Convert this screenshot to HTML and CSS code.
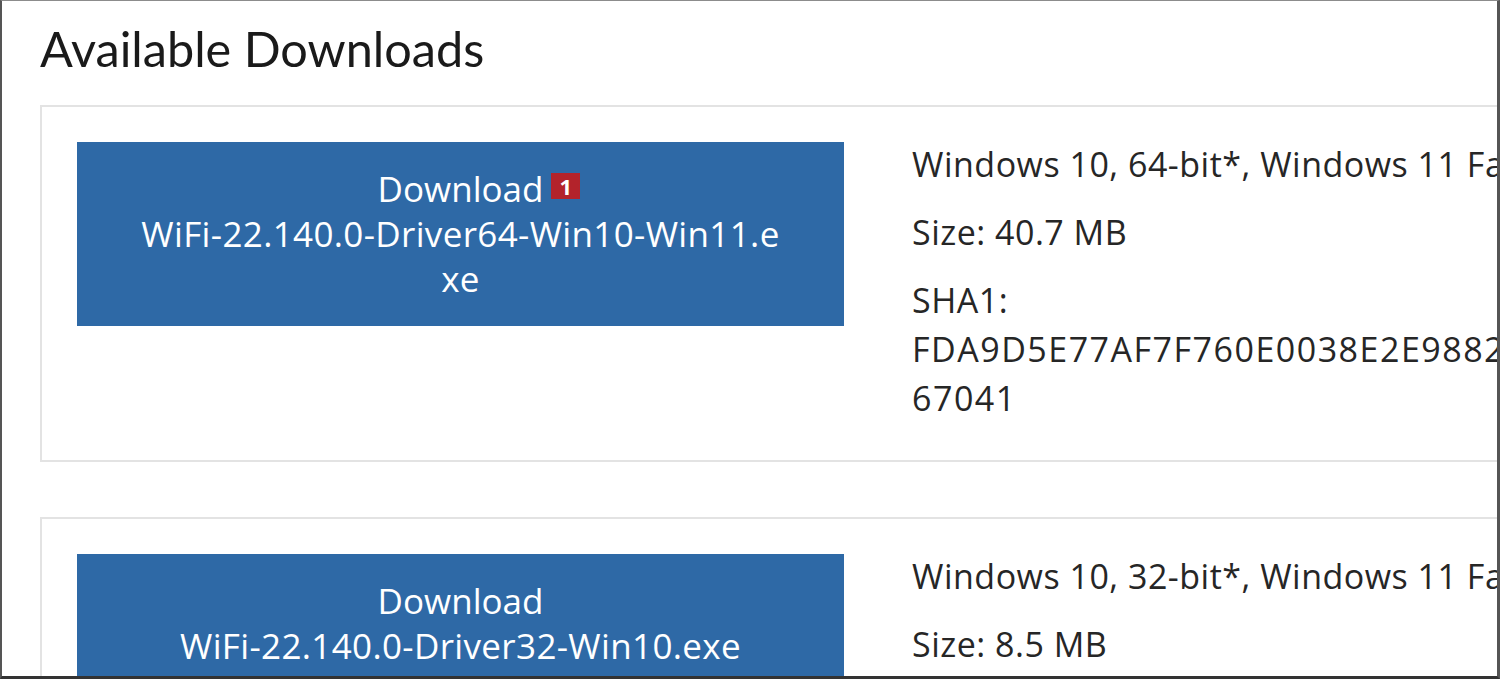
FILE: index.html
```html
<!DOCTYPE html>
<html lang="en">
<head>
    <meta charset="UTF-8">
    <meta name="viewport" content="width=device-width, initial-scale=1.0">
    <title>Available Downloads</title>
    <link rel="stylesheet" href="styles.css">
</head>
<body>
    <div class="frame">
        <h1 class="title">Available Downloads</h1>

        <div class="card">
            <a class="dl-button" href="#">
                <span class="dl-label"><span class="dl-word">Download<span class="badge">1</span></span></span>
                <span class="dl-file">WiFi-22.140.0-Driver64-Win10-Win11.exe</span>
            </a>
            <div class="info">
                <p>Windows 10, 64-bit*, Windows 11 Family*</p>
                <p>Size: 40.7 MB</p>
                <p>SHA1:<span class="hash">FDA9D5E77AF7F760E0038E2E98827B3C1D467041</span></p>
            </div>
        </div>

        <div class="card">
            <a class="dl-button" href="#">
                <span class="dl-label"><span class="dl-word">Download</span></span>
                <span class="dl-file">WiFi-22.140.0-Driver32-Win10.exe</span>
            </a>
            <div class="info">
                <p>Windows 10, 32-bit*, Windows 11 Family*</p>
                <p>Size: 8.5 MB</p>
                <p>SHA1:<span class="hash">3B0C7E21A94F5D86C2E07B1946AF38D5C2E10B74</span></p>
            </div>
        </div>
    </div>
</body>
</html>
```

FILE: styles.css
```css
body {
    margin: 0;
    font-family: "Open Sans", "Noto Sans", sans-serif;
    color: #262626;
    background: #fff;
}
.frame {
    width: 1500px;
    height: 679px;
    box-sizing: border-box;
    border-top: 1px solid #8c8c8c;
    border-left: 2px solid #555;
    border-right: 3px solid #555;
    border-bottom: 3px solid #333;
    padding-left: 38px;
    overflow: hidden;
}
.title {
    font-family: Lato, "Open Sans", sans-serif;
    font-weight: 400;
    font-size: 48.6px;
    line-height: 1.2;
    color: #1a1a1a;
    margin: 18px 0 28px;
}
.card {
    display: flex;
    align-items: flex-start;
    gap: 68px;
    width: 1700px;
    padding: 35px 35px 37px;
    border: 2px solid #e3e3e3;
    margin-bottom: 55px;
}
.dl-button {
    flex: 0 0 767px;
    box-sizing: border-box;
    padding: 24px 60px 25px;
    background-color: #2e69a6;
    color: #fff;
    text-decoration: none;
    text-align: center;
    font-size: 35px;
    line-height: 45px;
}
.dl-label, .dl-file {
    display: block;
}
.dl-word {
    position: relative;
}
.dl-file {
    word-break: break-all;
    letter-spacing: 0.35px;
}
/* badge sits next to the label without shifting it off centre */
.badge {
    position: absolute;
    left: 100%;
    top: 8px;
    margin-left: 8px;
    width: 29px;
    height: 26px;
    line-height: 26px;
    background-color: #b3232b;
    font-size: 22px;
    font-weight: 700;
    text-align: center;
}
.info {
    flex: 0 0 762px;
    font-size: 34px;
    line-height: 49px;
    letter-spacing: 0.5px;
    margin-top: -2px;
}
.info p {
    margin: 0 0 19px;
}
.info p:last-child {
    margin-bottom: 0;
}
.hash {
    display: block;
    word-break: break-all;
    letter-spacing: 1.5px;
}
```
